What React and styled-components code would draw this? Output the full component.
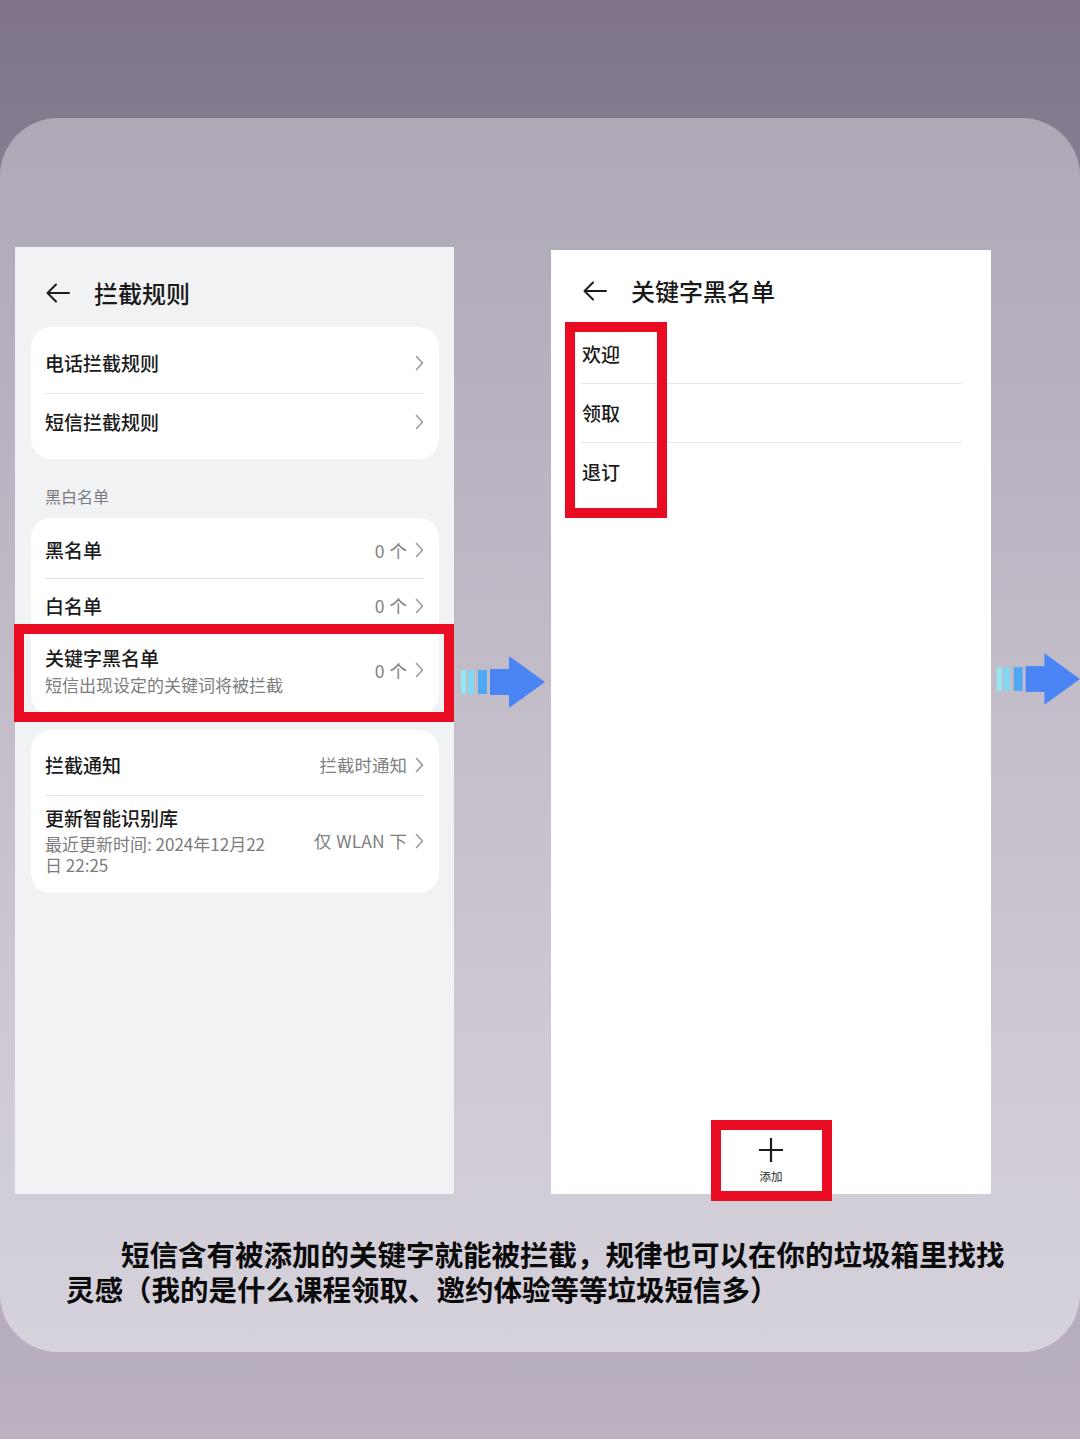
import React from "react";
import styled, { createGlobalStyle } from "styled-components";

const GlobalStyle = createGlobalStyle`
  body {
    margin: 0;
    font-family: "Noto Sans CJK SC", "Noto Sans", sans-serif;
  }
`;

const Page = styled.div`
  width: 1080px;
  height: 1439px;
  padding-top: 118px;
  box-sizing: border-box;
  overflow: hidden;
  background: linear-gradient(
    180deg,
    #7e7389 0%,
    #857b8f 9%,
    #aaa1b3 40%,
    #b6adbe 92%,
    #bdb2c2 100%
  );
`;

const Board = styled.section`
  height: 1234px;
  border-radius: 58px;
  padding-top: 129px;
  box-sizing: border-box;
  background: linear-gradient(
    180deg,
    #afa8b6 0%,
    #b4adbb 14%,
    #c2bcc9 45%,
    #cec9d4 75%,
    #d6d2dc 100%
  );
`;

const Shots = styled.div`
  display: flex;
  align-items: flex-start;
  padding-left: 15px;
`;

const Phone = styled.div`
  position: relative;
  width: ${(p) => p.$w}px;
  height: ${(p) => p.$h}px;
  margin-top: ${(p) => p.$top || 0}px;
  background: ${(p) => p.$bg};
  display: flex;
  flex-direction: column;
  flex-shrink: 0;
`;

const Header = styled.div`
  display: flex;
  align-items: center;
  gap: 24px;
  height: 32px;
  margin-top: ${(p) => p.$top}px;
  padding-left: ${(p) => p.$left}px;
  margin-bottom: 18px;
`;

const Title = styled.h1`
  margin: 0;
  font-size: 24px;
  font-weight: 500;
  color: #191919;
  line-height: 32px;
`;

const Group = styled.div`
  margin: ${(p) => p.$mt || 0}px 15px 0 16px;
  background: #fff;
  border-radius: 20px;
  padding: ${(p) => p.$pt || 4}px 0 ${(p) => p.$pb || 4}px;
`;

const Row = styled.div`
  display: flex;
  align-items: center;
  justify-content: space-between;
  min-height: ${(p) => p.$h}px;
  padding: 0 15px 0 14px;
  box-sizing: border-box;
`;

const Divider = styled.div`
  height: 1px;
  background: #e3e3e6;
  margin: 0 15px 0 14px;
`;

const RowText = styled.div`
  display: flex;
  flex-direction: column;
  gap: ${(p) => p.$gap || 3}px;
  max-width: ${(p) => p.$max || 300}px;
`;

const RowTitle = styled.span`
  font-size: 19px;
  font-weight: 500;
  color: #1a1a1a;
  line-height: 24px;
`;

const RowSub = styled.span`
  font-size: 17px;
  color: #7c7c7e;
  line-height: 21px;
`;

const RowValue = styled.span`
  display: flex;
  align-items: center;
  gap: 8px;
  font-size: 17.5px;
  color: #808082;
  white-space: nowrap;
  word-spacing: 1px;
`;

const SectionLabel = styled.div`
  margin: 27px 0 12px;
  padding-left: 30px;
  font-size: 16px;
  line-height: 20px;
  color: #7a7a7c;
`;

const Highlight = styled.div`
  position: absolute;
  left: ${(p) => p.$x}px;
  top: ${(p) => p.$y}px;
  width: ${(p) => p.$w}px;
  height: ${(p) => p.$h}px;
  border: 10px solid #ea0c22;
  box-sizing: border-box;
  pointer-events: none;
`;

const KeyList = styled.div`
  margin: 0 29px 0 30px;
`;

const KeyRow = styled.div`
  height: 59px;
  display: flex;
  align-items: center;
  padding: 0 0 2px 1px;
  box-sizing: border-box;
  font-size: 19px;
  font-weight: 500;
  color: #1a1a1a;
  border-bottom: ${(p) => (p.$last ? "none" : "1px solid #e6e6e8")};
`;

const AddButton = styled.div`
  margin-top: auto;
  margin-bottom: -7px;
  align-self: center;
  width: 121px;
  height: 81px;
  border: 10px solid #ea0c22;
  box-sizing: border-box;
  background: #fff;
  display: flex;
  flex-direction: column;
  align-items: center;
  padding-top: 7px;
  gap: 6px;
`;

const AddLabel = styled.span`
  font-size: 11.5px;
  line-height: 14px;
  color: #222;
`;

const ArrowSlot = styled.div`
  flex-shrink: 0;
  width: ${(p) => p.$w}px;
  padding-left: ${(p) => p.$pl}px;
  margin-top: ${(p) => p.$top}px;
  box-sizing: border-box;
  display: flex;
`;

const Caption = styled.p`
  margin: 42px 0 0;
  padding-left: 66px;
  width: 950px;
  text-indent: 55px;
  font-size: 28.5px;
  line-height: 35px;
  font-weight: 700;
  color: #0b0b0b;
`;

const BackIcon = () => (
  <svg width="24" height="20" viewBox="0 0 24 20" fill="none">
    <path
      d="M23 10H2M10 1.5L1.5 10L10 18.5"
      stroke="#1c1c1c"
      strokeWidth="2"
      strokeLinecap="round"
      strokeLinejoin="round"
    />
  </svg>
);

const Chevron = () => (
  <svg width="9" height="16" viewBox="0 0 9 16" fill="none">
    <path
      d="M1.5 1.5L7.5 8L1.5 14.5"
      stroke="#9a9a9c"
      strokeWidth="1.6"
      strokeLinecap="round"
      strokeLinejoin="round"
    />
  </svg>
);

const PlusIcon = () => (
  <svg width="26" height="26" viewBox="0 0 26 26" fill="none">
    <path d="M13 1V25M1 13H25" stroke="#1c1c1c" strokeWidth="2.2" />
  </svg>
);

const FlowArrow = () => (
  <svg width="86" height="54" viewBox="0 0 86 54">
    <rect x="2" y="15" width="5" height="24" fill="#93e6f3" />
    <rect x="9" y="15" width="6" height="24" fill="#80daf4" />
    <rect x="19" y="15" width="9" height="24" fill="#4ea9f2" />
    <rect x="31" y="14" width="21" height="26" fill="#4a84f5" />
    <polygon points="50,1 86,27 50,53" fill="#4a84f5" />
  </svg>
);

const Value = ({ children }) => (
  <RowValue>
    {children}
    <Chevron />
  </RowValue>
);

const keywords = ["欢迎", "领取", "退订"];

export default function App() {
  return (
    <>
      <GlobalStyle />
      <Page>
        <Board>
          <Shots>
            {/* 拦截规则 */}
            <Phone $w={439} $h={947} $bg="#f1f2f4">
              <Header $top={30} $left={31}>
                <BackIcon />
                <Title>拦截规则</Title>
              </Header>

              <Group $pt={6} $pb={9}>
                <Row $h={60}>
                  <RowTitle>电话拦截规则</RowTitle>
                  <Value />
                </Row>
                <Divider />
                <Row $h={56}>
                  <RowTitle>短信拦截规则</RowTitle>
                  <Value />
                </Row>
              </Group>

              <SectionLabel>黑白名单</SectionLabel>
              <Group $pb={8}>
                <Row $h={56}>
                  <RowTitle>黑名单</RowTitle>
                  <Value>0 个</Value>
                </Row>
                <Divider />
                <Row $h={53}>
                  <RowTitle>白名单</RowTitle>
                  <Value>0 个</Value>
                </Row>
                <Divider />
                <Row $h={74}>
                  <RowText $gap={4}>
                    <RowTitle>关键字黑名单</RowTitle>
                    <RowSub>短信出现设定的关键词将被拦截</RowSub>
                  </RowText>
                  <Value>0 个</Value>
                </Row>
              </Group>

              <Group $mt={15} $pb={8}>
                <Row $h={61}>
                  <RowTitle>拦截通知</RowTitle>
                  <Value>拦截时通知</Value>
                </Row>
                <Divider />
                <Row $h={89}>
                  <RowText $max={232}>
                    <RowTitle>更新智能识别库</RowTitle>
                    <RowSub>最近更新时间: 2024年12月22日 22:25</RowSub>
                  </RowText>
                  <Value>仅 WLAN 下</Value>
                </Row>
              </Group>

              <Highlight $x={-1} $y={377} $w={440} $h={98} />
            </Phone>

            <ArrowSlot $w={97} $pl={5} $top={408}>
              <FlowArrow />
            </ArrowSlot>

            {/* 关键字黑名单 */}
            <Phone $w={440} $h={944} $top={3} $bg="#ffffff">
              <Header $top={25} $left={32}>
                <BackIcon />
                <Title>关键字黑名单</Title>
              </Header>
              <KeyList>
                {keywords.map((k, i) => (
                  <KeyRow key={k} $last={i === keywords.length - 1}>
                    {k}
                  </KeyRow>
                ))}
              </KeyList>
              <Highlight $x={14} $y={72} $w={102} $h={196} />
              <AddButton>
                <PlusIcon />
                <AddLabel>添加</AddLabel>
              </AddButton>
            </Phone>

            <ArrowSlot $w={89} $pl={4} $top={405}>
              <FlowArrow />
            </ArrowSlot>
          </Shots>

          <Caption>
            短信含有被添加的关键字就能被拦截，规律也可以在你的垃圾箱里找找灵感（我的是什么课程领取、邀约体验等等垃圾短信多）
          </Caption>
        </Board>
      </Page>
    </>
  );
}
